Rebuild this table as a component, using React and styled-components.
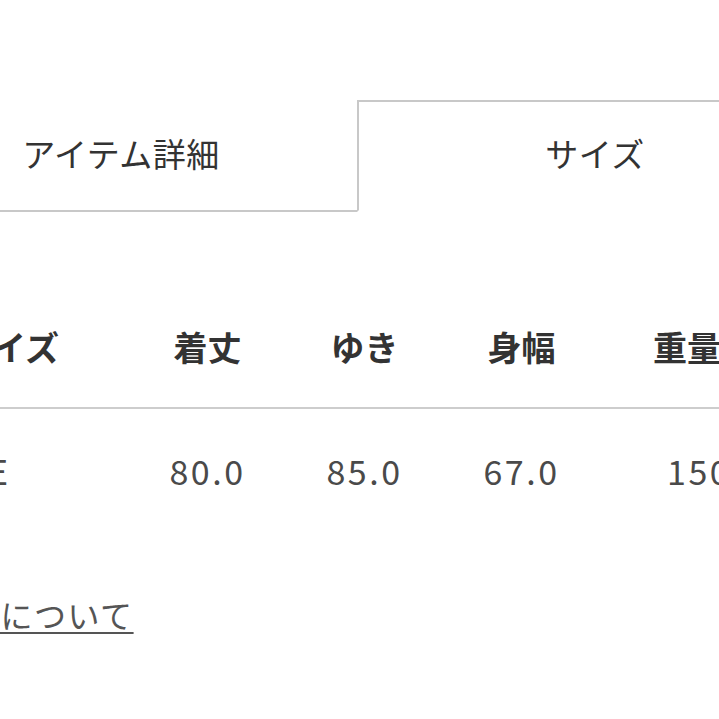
import React from "react";
import styled, { createGlobalStyle } from "styled-components";

const Global = createGlobalStyle`
  html, body { margin: 0; padding: 0; background: #fff; }
  body { overflow: hidden; font-family: "Noto Sans CJK JP", "Noto Sans", sans-serif; color: #333; }
`;

const Page = styled.div`
  width: 719px;
  height: 719px;
  overflow: hidden;
  background: #fff;
`;

const Wrapper = styled.div`
  margin-left: -117px;
  width: 948px;
  padding-top: 100px;
`;

const TabBar = styled.div`
  display: flex;
  height: 112px;
`;

const Tab = styled.div`
  width: 474px;
  box-sizing: border-box;
  display: flex;
  align-items: center;
  justify-content: center;
  font-size: 33px;
  font-weight: 400;
  color: #333;
  letter-spacing: 0.5px;
  padding-bottom: 6px;
  border-bottom: 2px solid ${(p) => (p.$active ? "transparent" : "#c8c8c8")};
  border-top: 2px solid ${(p) => (p.$active ? "#c8c8c8" : "transparent")};
  border-left: 2px solid ${(p) => (p.$active ? "#c8c8c8" : "transparent")};
`;

const Table = styled.div`
  margin-top: 74px;
  margin-left: 37px;
`;

const Row = styled.div`
  display: grid;
  grid-template-columns: 209px 157px 157px 157px 220px;
  align-items: center;
  height: ${(p) => (p.$head ? "121px" : "122px")};
  border-bottom: ${(p) => (p.$head ? "2px solid #cdcdcd" : "none")};
`;

const Cell = styled.div`
  text-align: ${(p) => (p.$left ? "left" : "center")};
  padding-left: ${(p) => p.$pad || 0}px;
  font-size: 34px;
  white-space: nowrap;
  font-weight: ${(p) => (p.$head ? 700 : 400)};
  color: ${(p) => (p.$head ? "#333" : "#4a4a4a")};
  letter-spacing: ${(p) => (p.$head ? "0px" : "2.5px")};
`;

const LinkRow = styled.div`
  margin-top: 62px;
  margin-left: 18px;
`;

const SizeLink = styled.a`
  font-size: 32px;
  line-height: 42px;
  color: #555;
  text-decoration: underline;
  text-decoration-thickness: 2px;
  text-underline-offset: 4px;
  letter-spacing: 1.5px;
`;

const heads = ["着丈", "ゆき", "身幅", "重量(g)"];
const values = ["80.0", "85.0", "67.0", "150g"];

export default function App() {
  return (
    <Page>
      <Global />
      <Wrapper>
        <TabBar>
          <Tab>アイテム詳細</Tab>
          <Tab $active>サイズ</Tab>
        </TabBar>
        <Table>
          <Row $head>
            <Cell $head $left $pad={38}>サイズ</Cell>
            {heads.map((h) => (
              <Cell $head key={h}>{h}</Cell>
            ))}
          </Row>
          <Row>
            <Cell $left>FREE</Cell>
            {values.map((v) => (
              <Cell key={v}>{v}</Cell>
            ))}
          </Row>
        </Table>
        <LinkRow>
          <SizeLink href="#">サイズについて</SizeLink>
        </LinkRow>
      </Wrapper>
    </Page>
  );
}
